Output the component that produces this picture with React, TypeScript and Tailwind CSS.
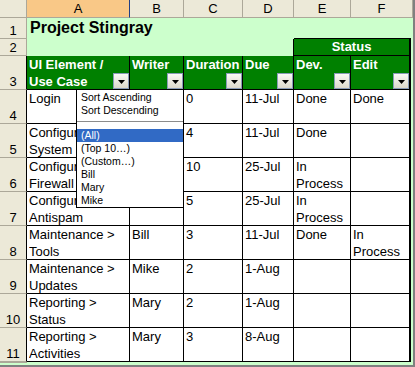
import React from 'react';

// a: lines of column A; hide: lines partly covered by the filter list
const rows = [
  { n: 4, a: ['Login'], b: '', c: '0', d: '11-Jul', e: 'Done', f: 'Done', hide: [] as number[] },
  { n: 5, a: ['Configure >', 'System'], b: '', c: '4', d: '11-Jul', e: 'Done', f: '', hide: [0, 1] },
  { n: 6, a: ['Configure >', 'Firewall'], b: '', c: '10', d: '25-Jul', e: 'In Process', f: '', hide: [0, 1] },
  { n: 7, a: ['Configure >', 'Antispam'], b: '', c: '5', d: '25-Jul', e: 'In Process', f: '', hide: [0] },
  { n: 8, a: ['Maintenance >', 'Tools'], b: 'Bill', c: '3', d: '11-Jul', e: 'Done', f: 'In Process', hide: [] },
  { n: 9, a: ['Maintenance >', 'Updates'], b: 'Mike', c: '2', d: '1-Aug', e: '', f: '', hide: [] },
  { n: 10, a: ['Reporting >', 'Status'], b: 'Mary', c: '2', d: '1-Aug', e: '', f: '', hide: [] },
  { n: 11, a: ['Reporting >', 'Activities'], b: 'Mary', c: '3', d: '8-Aug', e: '', f: '', hide: [] },
];

const filterItems = ['(All)', '(Top 10…)', '(Custom…)', 'Bill', 'Mary', 'Mike'];

function FilterBtn() {
  return (
    <span className="absolute right-0 bottom-0 w-4 h-4 flex items-center justify-center border border-[#8a9cb8] bg-linear-to-b from-[#fbfaf6] to-[#dcd9cc]">
      <svg width="7" height="4" viewBox="0 0 7 4" className="mt-[1px]">
        <path d="M0 0h7L3.5 4z" fill="#000" />
      </svg>
    </span>
  );
}

function RowHead({ n, dark }: { n?: number; dark?: boolean }) {
  return (
    <div
      className={`flex items-end justify-center leading-[15px] text-[13px] bg-[#ece9d8] border-r border-b border-[#aca899] ${
        dark ? 'border-r-black' : ''
      }`}
    >
      {n}
    </div>
  );
}

const cellCls = 'bg-white border-b border-black pl-[2px] pr-[1px] text-[13px] leading-[17px] overflow-hidden';

function Cell({ text, last }: { text: string; last?: boolean }) {
  return <div className={`${cellCls} ${last ? 'border-r-2' : 'border-r'}`}>{text}</div>;
}

function HeadCell({ lines, last }: { lines: string[]; last?: boolean }) {
  return (
    <div
      className={`relative bg-[#008000] border-b border-black pl-[2px] text-white font-bold text-[13px] leading-[17px] ${
        last ? 'border-r-2' : 'border-r'
      }`}
    >
      {lines.map((l) => (
        <div key={l} className="whitespace-nowrap">{l}</div>
      ))}
      <FilterBtn />
    </div>
  );
}

export default function App() {
  const colHead = 'flex items-center justify-center pt-[1px] text-[13px] leading-[16px] bg-[#ece9d8] border-r border-b border-[#aca899]';

  return (
    <div className="w-[415px] h-[367px] border-r-2 border-b-2 border-[#808080] font-['Liberation_Sans',Arial,sans-serif] text-black">
      <div className="relative w-[413px] h-[365px] overflow-hidden bg-[#ccffcc]">
        <div className="grid grid-cols-[27px_103px_54px_59px_51px_57px_60px_2px] grid-rows-[18px_21px_17px_repeat(9,34px)]">
          {/* column headers */}
          <div className="bg-[#ece9d8] border-r border-b border-[#aca899]" />
          <div className={`${colHead} bg-[#f9c887] border-r-[#213f86]`}>A</div>
          <div className={colHead}>B</div>
          <div className={colHead}>C</div>
          <div className={colHead}>D</div>
          <div className={colHead}>E</div>
          <div className={`${colHead} col-span-2`}>F</div>

          {/* row 1 */}
          <RowHead n={1} />
          <div className="col-span-4 pl-[3px] text-[16px] leading-[20px] font-bold whitespace-nowrap">
            Project Stingray
          </div>
          <div className="col-span-2 border-b border-black" />
          <div />

          {/* row 2 */}
          <RowHead n={2} />
          <div className="col-span-4 border-r border-black" />
          <div className="col-span-2 bg-[#008000] border-r-2 border-b border-black text-white font-bold text-[13px] leading-[16px] text-center">
            Status
          </div>
          <div />

          {/* row 3 */}
          <RowHead n={3} dark />
          <HeadCell lines={['UI Element /', 'Use Case']} />
          <HeadCell lines={['Writer']} />
          <HeadCell lines={['Duration']} />
          <HeadCell lines={['Due']} />
          <HeadCell lines={['Dev.']} />
          <HeadCell lines={['Edit']} last />
          <div />

          {rows.map((r) => (
            <React.Fragment key={r.n}>
              <RowHead n={r.n} dark />
              <div className={`${cellCls} border-r`}>
                {r.a.map((l, i) => (
                  <div
                    key={l}
                    className={`whitespace-nowrap overflow-hidden ${r.hide.includes(i) ? 'w-[47px]' : ''}`}
                  >
                    {l}
                  </div>
                ))}
              </div>
              <Cell text={r.b} />
              <Cell text={r.c} />
              <Cell text={r.d} />
              <Cell text={r.e} />
              <Cell text={r.f} last />
              <div />
            </React.Fragment>
          ))}

          <RowHead />
        </div>

        {/* autofilter dropdown */}
        <div className="absolute left-[76px] top-[89px] w-[108px] h-[119px] bg-white border border-black pt-[1px] text-[10.5px] leading-[13px]">
          <div className="h-[13px] pl-[4px]">Sort Ascending</div>
          <div className="h-[13px] pl-[4px]">Sort Descending</div>
          <div className="mt-[4px] h-px bg-[#8c8c8c]" />
          <div className="mt-[7px]">
            {filterItems.map((it, i) => (
              <div
                key={it}
                className={`h-[13px] pl-[4px] ${i === 0 ? 'bg-[#316ac5] text-white' : ''}`}
              >
                {it}
              </div>
            ))}
          </div>
        </div>
      </div>
    </div>
  );
}
